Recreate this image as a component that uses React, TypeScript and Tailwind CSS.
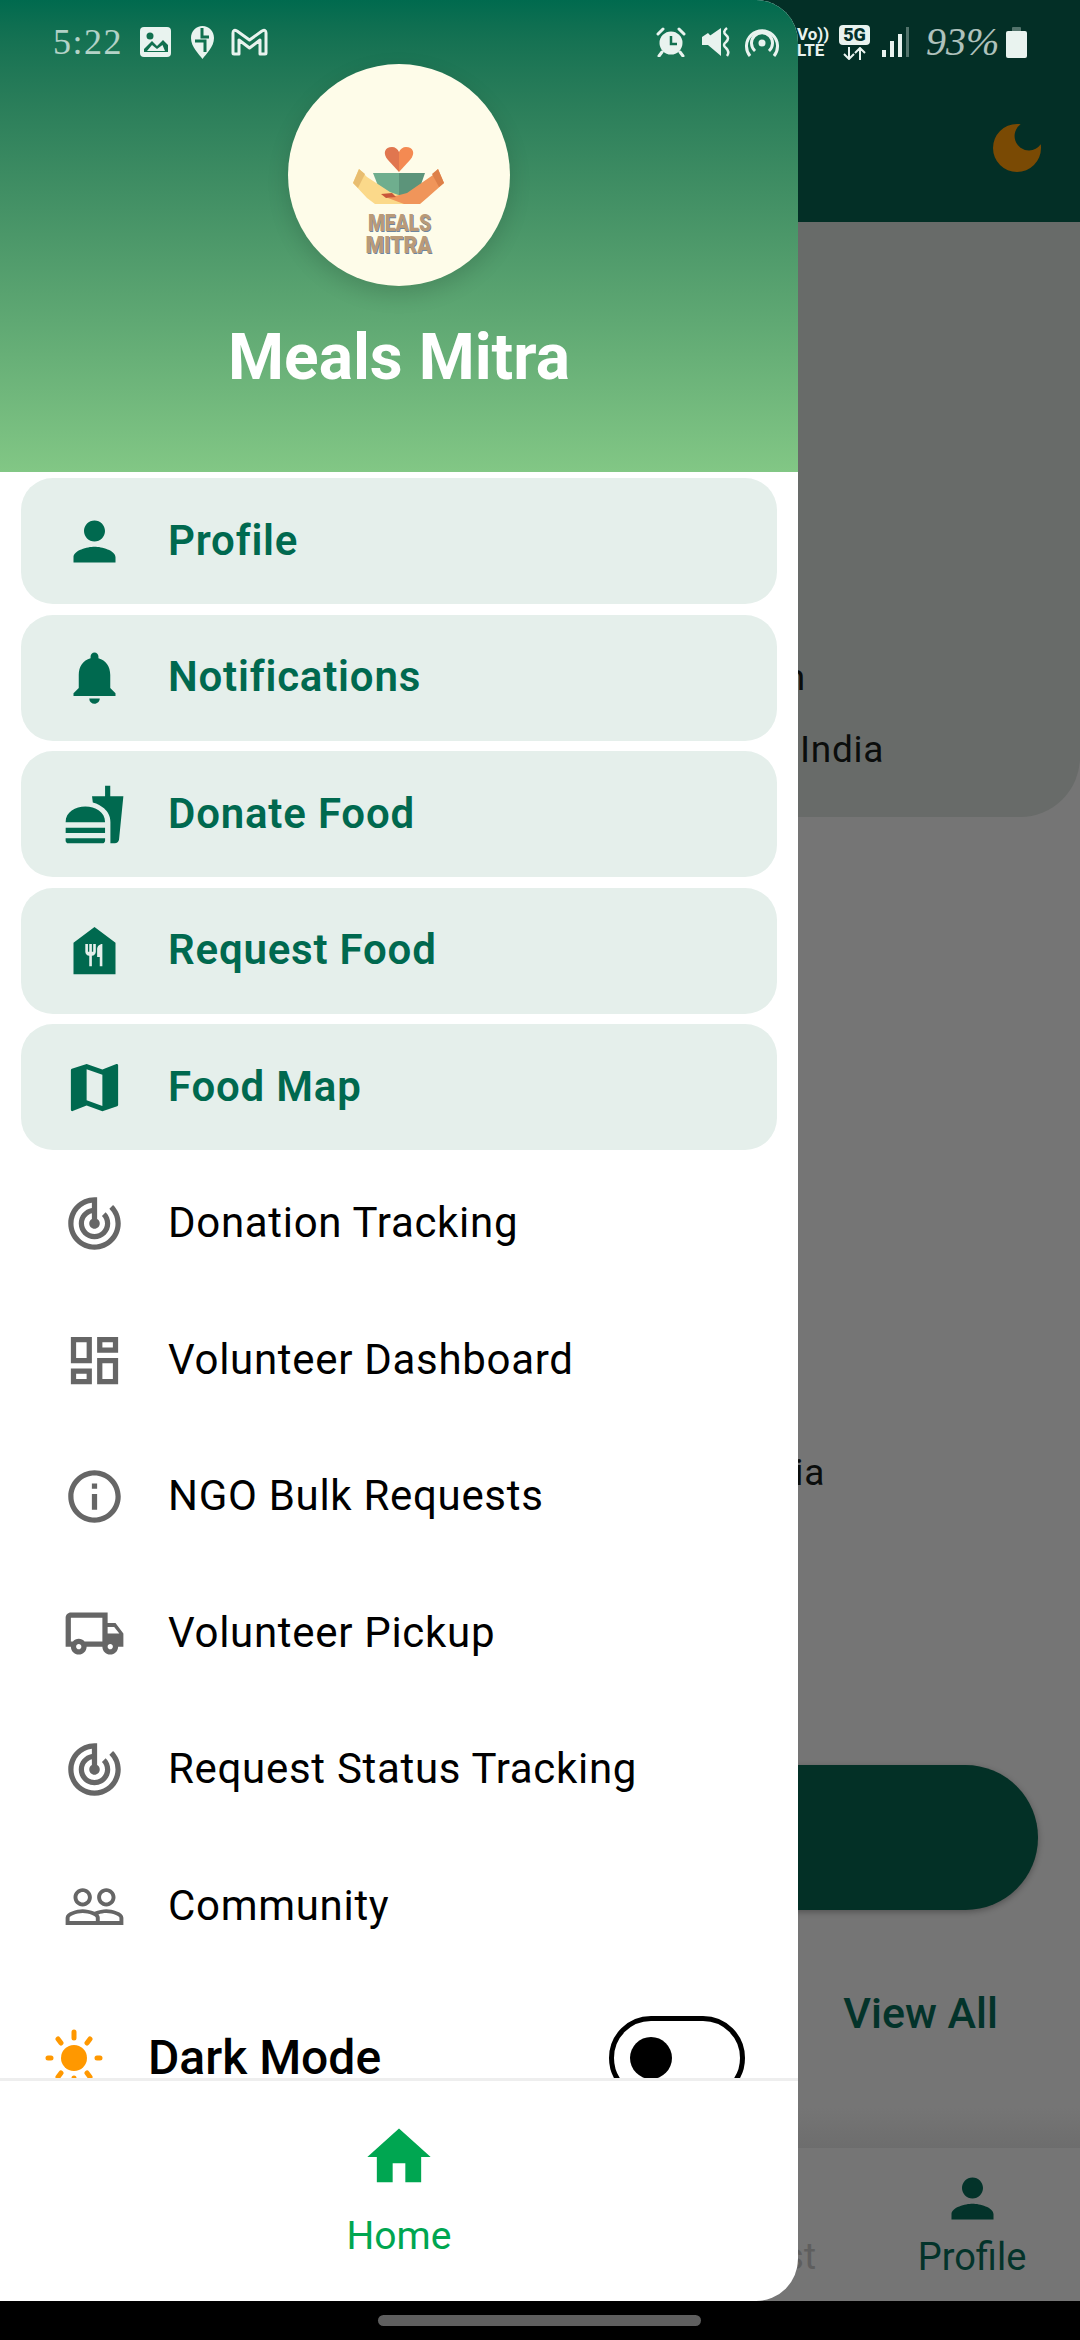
import {
  MdPerson,
  MdNotifications,
  MdFastfood,
  MdFoodBank,
  MdMap,
  MdTrackChanges,
  MdOutlineDashboard,
  MdInfoOutline,
  MdOutlineLocalShipping,
  MdPeopleOutline,
  MdHome,
  MdDarkMode,
} from "react-icons/md";

const activeItems = [
  { label: "Profile", icon: MdPerson },
  { label: "Notifications", icon: MdNotifications },
  { label: "Donate Food", icon: MdFastfood },
  { label: "Request Food", icon: MdFoodBank },
  { label: "Food Map", icon: MdMap },
];

const plainItems = [
  { label: "Donation Tracking", icon: MdTrackChanges },
  { label: "Volunteer Dashboard", icon: MdOutlineDashboard },
  { label: "NGO Bulk Requests", icon: MdInfoOutline },
  { label: "Volunteer Pickup", icon: MdOutlineLocalShipping },
  { label: "Request Status Tracking", icon: MdTrackChanges },
  { label: "Community", icon: MdPeopleOutline },
];

function Logo() {
  return (
    <div className="flex flex-col items-center font-black text-[24px] leading-[22px] text-[#b99a78] [text-shadow:1px_1px_0_#6d86a0]">
      <svg width="222" height="148" viewBox="0 0 222 148">
        <path d="M111 108 L100 96 C94 89 97 83 104 83 C107 83 110 85 111 88 Z" fill="#e0764f" />
        <path d="M111 108 L122 96 C128 89 125 83 118 83 C115 83 112 85 111 88 Z" fill="#f48a52" />
        <path d="M85 109 H111 V132 H94 Z" fill="#6fae8e" />
        <path d="M111 109 H137 L129 132 H111 Z" fill="#5c947a" />
        <path d="M71 105 L65 119 L79 134 L87 140 H117 L119 134 L102 128 L79 113 Z" fill="#fbd98a" />
        <path d="M71 105 L65 119 L70 124 L77 110 Z" fill="#e8bd70" />
        <path d="M150 105 L156 119 L139 134 L132 140 H116 L100 134 L119 129 L145 111 Z" fill="#f0955a" />
        <path d="M150 105 L156 119 L151 123 L144 110 Z" fill="#dd7f48" />
        <path d="M93 130 L104 129 L108 133 L98 134 Z" fill="#c9573a" />
      </svg>
      <span className="scale-x-[0.8]">MEALS</span>
      <span className="scale-x-[0.88]">MITRA</span>
    </div>
  );
}

function StatusBar() {
  return (
    <div className="absolute top-0 left-0 w-full h-[84px] flex items-center justify-between pl-[53px] pr-[53px] text-[#e9f3ef]">
      <div className="flex items-center">
        <span className="w-[72px] text-[36px] leading-none tracking-[1.5px] font-['Liberation_Serif',serif] opacity-75">5:22</span>
        <svg className="ml-[15px]" width="31" height="30" viewBox="0 0 31 30">
          <rect width="31" height="30" rx="4" fill="currentColor" />
          <circle cx="10" cy="9" r="3.5" fill="#11704f" />
          <path d="M4 25 L4 22 L12 14 L17 19 L23 13 L28 18 V25 Z" fill="#11704f" />
          <path d="M7 24 H25 L22.5 18 L17 22 L12 18 Z" fill="currentColor" />
        </svg>
        <svg className="ml-[19px]" width="25" height="33" viewBox="0 0 25 33">
          <path d="M12.5 33 C9 28 1 21 1 12 C1 5 6 0 12.5 0 C19 0 24 5 24 12 C24 21 16 28 12.5 33 Z" fill="currentColor" />
          <path d="M12 2 V11 H19 M5 15 H15 V26" fill="none" stroke="#11704f" strokeWidth="3" />
        </svg>
        <svg className="ml-[16px]" width="37" height="28" viewBox="0 0 37 28">
          <path d="M2 25 V5 Q2 1 6 3 L18.5 12 L31 3 Q35 1 35 5 V25 Q35 26 34 26 H29 V12 L18.5 20 L8 12 V26 H3 Q2 26 2 25 Z" fill="none" stroke="currentColor" strokeWidth="3" strokeLinejoin="round" />
        </svg>
      </div>
      <div className="flex items-center">
        <svg width="30" height="30" viewBox="0 0 30 30">
          <circle cx="15" cy="16" r="11.5" fill="currentColor" />
          <path d="M15 9 V17 H21" fill="none" stroke="#11704f" strokeWidth="2.5" />
          <path d="M2 7 L7 2 M28 7 L23 2 M6 25 L3 29 M24 25 L27 29" stroke="currentColor" strokeWidth="3" strokeLinecap="round" />
        </svg>
        <svg className="ml-[16px]" width="30" height="30" viewBox="0 0 30 30">
          <path d="M0 10 H6 L19 1 V28 Z" fill="currentColor" />
          <path d="M0 10 V18 H6 L19 29 V20 L6 6 Z" fill="currentColor" />
          <path d="M25 1 Q20 5 24 8 Q28 11 24 15 Q20 18 24 21 Q28 25 25 29" fill="none" stroke="currentColor" strokeWidth="2.5" />
        </svg>
        <svg className="ml-[13px]" width="34" height="30" viewBox="0 0 34 30">
          <circle cx="17" cy="16" r="3.5" fill="currentColor" />
          <path d="M10 24 A10.5 10.5 0 1 1 24 24" fill="none" stroke="currentColor" strokeWidth="3" />
          <path d="M5 29 A15.5 15.5 0 1 1 29 29" fill="none" stroke="currentColor" strokeWidth="3" />
        </svg>
        <div className="ml-[18px] w-[31px] flex flex-col font-['Roboto',sans-serif] font-bold text-[17px] leading-[16px]">
          <span>Vo))</span>
          <span>LTE</span>
        </div>
        <div className="ml-[11px] w-[31px] flex flex-col items-center font-['Roboto',sans-serif]">
          <span className="w-full h-[20px] rounded-[4px] bg-[#e9f3ef] text-[#03302a] text-[18px] leading-[20px] font-black text-center">5G</span>
          <svg className="mt-[2px]" width="23" height="13" viewBox="0 0 23 13">
            <path d="M6 0 V12 M1 7 L6 12 L11 7 M17 13 V1 M12 6 L17 1 L22 6" fill="none" stroke="currentColor" strokeWidth="2" />
          </svg>
        </div>
        <svg className="ml-[12px]" width="27" height="30" viewBox="0 0 27 30">
          <rect x="0" y="23" width="4" height="7" fill="currentColor" />
          <rect x="8" y="14" width="4" height="16" fill="currentColor" />
          <rect x="16" y="7" width="4" height="23" fill="currentColor" />
          <rect x="24" y="0" width="3" height="30" fill="currentColor" opacity="0.35" />
        </svg>
        <span className="ml-[17px] w-[75px] text-[40px] leading-none italic font-['Liberation_Serif',serif] opacity-75">93%</span>
        <svg className="ml-[5px]" width="21" height="31" viewBox="0 0 21 31">
          <rect x="6" y="0" width="9" height="5" rx="1" fill="currentColor" opacity="0.35" />
          <rect x="0" y="4" width="21" height="27" rx="2" fill="currentColor" />
        </svg>
      </div>
    </div>
  );
}

function SunIcon() {
  return (
    <svg width="58" height="58" viewBox="0 0 58 58">
      <circle cx="29" cy="29" r="13" fill="#ff9800" />
      <g stroke="#ff9800" strokeWidth="5" strokeLinecap="round">
        <path d="M29 3 V9 M29 49 V55 M3 29 H6 M52 29 H55 M13 10 L16 14 M45 10 L42 14 M13 48 L16 44 M45 48 L42 44" />
      </g>
    </svg>
  );
}

// what stays visible of the home page behind the drawer
function Backdrop() {
  return (
    <div className="h-[2301px] bg-[#757575] flex flex-col font-['Roboto',sans-serif] overflow-hidden">
      <div className="h-[222px] shrink-0 bg-[#032f26] flex justify-end pt-[116px] pr-[31px] text-[#7a4a04]">
        <MdDarkMode size={64} />
      </div>
      <div className="h-[595px] shrink-0 bg-[#686b69] rounded-br-[60px] flex flex-col pt-[431px] text-[37px] leading-[50px] tracking-[0.7px] text-[#0b0d0c]">
        <span className="w-[806px] text-right">Location</span>
        <span className="w-[884px] text-right mt-[22px]">India</span>
      </div>
      <span className="w-[825px] text-right shrink-0 mt-[631px] text-[37px] leading-[50px] tracking-[0.7px] text-[#0b0d0c]">India</span>
      <div className="w-[1038px] h-[145px] shrink-0 mt-[267px] rounded-full bg-[#033026] shadow-[0_2px_6px_rgba(0,0,0,0.3)]" />
      <div className="h-[238px] shrink-0 flex justify-end items-start pr-[82px] pt-[78px] text-[#03332a] text-[43px] leading-[50px] font-medium">View All</div>
      <div className="h-[40px] shrink-0 -mt-[40px] bg-gradient-to-b from-[#757575] to-[#6d6d6d]" />
      <div className="flex-1 flex bg-[#757575]">
        <span className="w-[816px] text-right pt-[87px] text-[37px] leading-[44px] text-[#5e5e5e]">Request</span>
        <div className="flex-1 flex flex-col items-center text-[#03332a] pt-[19px] pl-[48px]">
          <MdPerson size={63} />
          <span className="text-[38px] leading-[44px] mt-[5px]">Profile</span>
        </div>
      </div>
    </div>
  );
}

export default function App() {
  return (
    <div className="relative w-[1080px] h-[2340px] bg-black overflow-hidden font-['Roboto',sans-serif]">
      <Backdrop />

      {/* Drawer */}
      <div className="absolute top-0 left-0 w-[798px] h-[2301px] bg-white rounded-r-[42px] overflow-hidden flex flex-col">
        <div className="h-[472px] shrink-0 bg-gradient-to-b from-[#006a4e] to-[#82c785] flex flex-col items-center pt-[64px]">
          <div className="w-[222px] h-[222px] rounded-full bg-[#fefce9] shadow-[0_8px_22px_rgba(0,0,0,0.14)]">
            <Logo />
          </div>
          <span className="mt-[35px] text-[64px] leading-[74px] font-bold text-white">Meals Mitra</span>
        </div>

        <div className="flex-1 min-h-0 overflow-hidden pt-[6px]">
          {activeItems.map(({ label, icon: Icon }) => (
            <div key={label} className="h-[126px] mx-[21px] mb-[10.5px] rounded-[32px] bg-[#e5efeb] px-[42px] flex items-center gap-[42px] text-[#00694f]">
              <Icon size={63} className="shrink-0" />
              <span className="pb-[2px] text-[42px] font-semibold tracking-[0.8px]">{label}</span>
            </div>
          ))}
          {plainItems.map(({ label, icon: Icon }) => (
            <div key={label} className="h-[126px] mx-[21px] mb-[10.5px] px-[42px] flex items-center gap-[42px]">
              <Icon size={63} className="shrink-0 text-[#666666]" />
              <span className="pb-[2px] text-[42px] tracking-[0.7px] text-black">{label}</span>
            </div>
          ))}
          <div className="mt-[47px] h-[84px] pl-[45px] pr-[53px] flex items-center">
            <SunIcon />
            <span className="ml-[45px] text-[48px] leading-[40px] font-medium text-black">Dark Mode</span>
            <div className="ml-auto w-[136px] h-[84px] shrink-0 rounded-full border-[5px] border-black flex items-center pl-[16px]">
              <div className="w-[42px] h-[42px] rounded-full bg-black" />
            </div>
          </div>
        </div>

        <div className="h-[223px] shrink-0 border-t-[3px] border-[#eeeeee] flex flex-col items-center text-[#00a651]">
          <MdHome size={76} className="mt-[38px]" />
          <span className="mt-[19px] text-[39px] leading-[44px]">Home</span>
        </div>
      </div>

      <StatusBar />

      <div className="absolute left-[378px] top-[2315px] w-[323px] h-[11px] rounded-full bg-[#5f5f5f]" />
    </div>
  );
}
